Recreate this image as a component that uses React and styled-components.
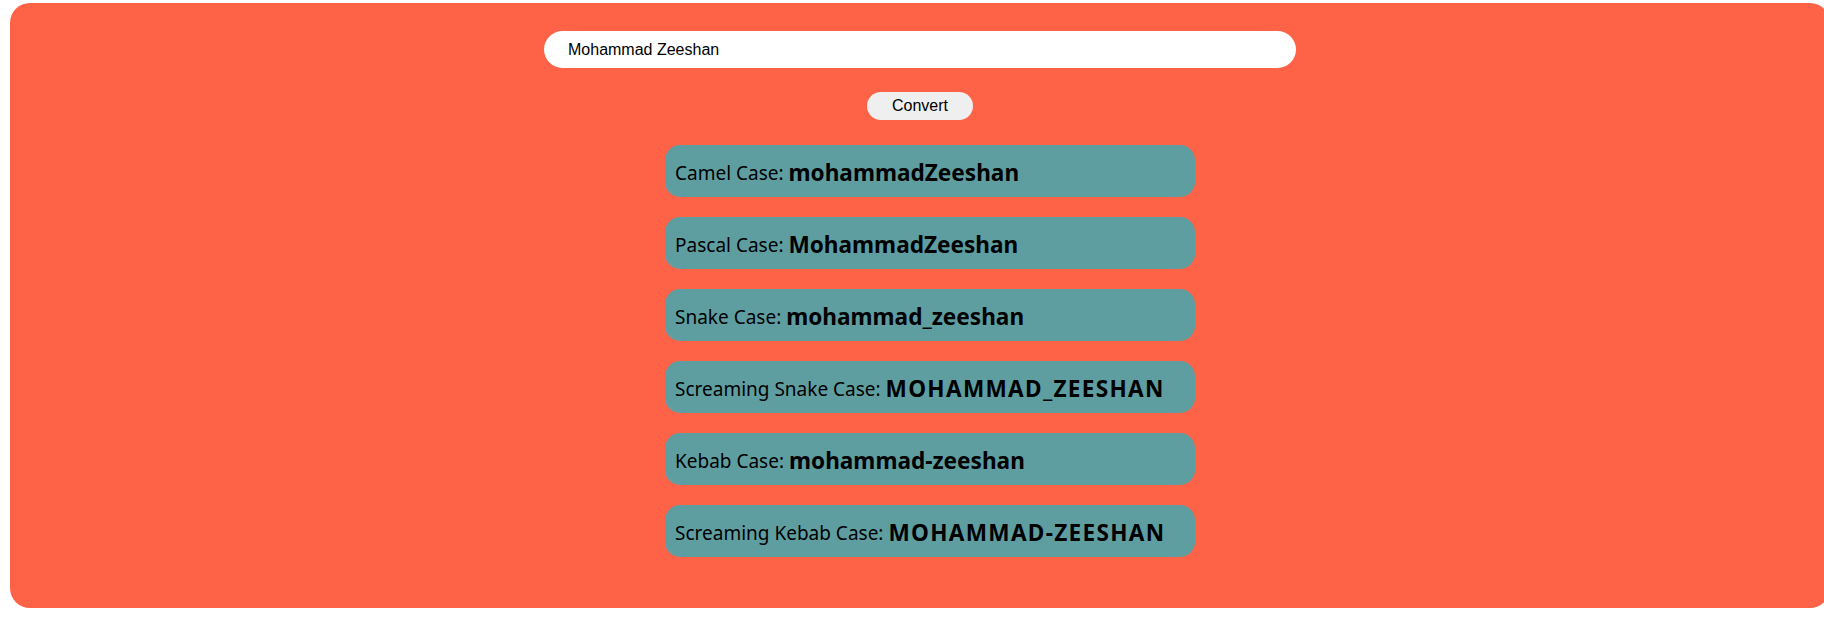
import React, { useState } from "react";
import styled, { createGlobalStyle } from "styled-components";

const Global = createGlobalStyle`
  html, body {
    margin: 0;
    padding: 0;
    background: #ffffff;
    overflow: hidden;
  }
  body {
    font-family: "Liberation Sans", Arial, sans-serif;
  }
`;

const Panel = styled.div`
  margin: 3px 0 0 10px;
  width: 1820px;
  height: 605px;
  box-sizing: border-box;
  background: #ff6347;
  border-radius: 20px;
  padding-top: 28px;
  display: flex;
  flex-direction: column;
  align-items: center;
`;

const Input = styled.input`
  width: 752px;
  height: 37px;
  box-sizing: border-box;
  border: none;
  outline: none;
  border-radius: 19px;
  background: #ffffff;
  padding: 0 24px;
  font-family: "Liberation Sans", Arial, sans-serif;
  font-size: 16px;
  color: #000;
`;

const Button = styled.button`
  margin-top: 24px;
  width: 106px;
  height: 28px;
  border: none;
  border-radius: 14px;
  background: #efefef;
  font-family: "Liberation Sans", Arial, sans-serif;
  font-size: 16px;
  color: #000;
  padding: 0;
  cursor: pointer;
`;

const List = styled.div`
  margin-top: 25px;
  margin-left: 20px;
  display: flex;
  flex-direction: column;
  gap: 20px;
`;

const Card = styled.div`
  width: 530px;
  height: 52px;
  box-sizing: border-box;
  background: #5f9ea0;
  border-radius: 15px;
  padding: 3px 10px 0;
  display: flex;
  align-items: center;
  font-family: "Noto Sans", "Open Sans", sans-serif;
  color: #000;
`;

const Label = styled.span`
  font-size: 19px;
  white-space: pre;
`;

const Value = styled.span`
  font-size: 22.6px;
  font-weight: 700;
  letter-spacing: ${(p) => (p.$upper ? "1.3px" : "0")};
`;

const toWords = (s) => s.trim().split(/\s+/).filter(Boolean).map((w) => w.toLowerCase());
const cap = (w) => w.charAt(0).toUpperCase() + w.slice(1);

const cases = [
  ["Camel Case", (w) => w.map((x, i) => (i ? cap(x) : x)).join(""), false],
  ["Pascal Case", (w) => w.map(cap).join(""), false],
  ["Snake Case", (w) => w.join("_"), false],
  ["Screaming Snake Case", (w) => w.join("_").toUpperCase(), true],
  ["Kebab Case", (w) => w.join("-"), false],
  ["Screaming Kebab Case", (w) => w.join("-").toUpperCase(), true],
];

export default function App() {
  const [text, setText] = useState("Mohammad Zeeshan");
  const [words, setWords] = useState(toWords("Mohammad Zeeshan"));
  return (
    <>
      <Global />
      <Panel>
        <Input value={text} onChange={(e) => setText(e.target.value)} />
        <Button onClick={() => setWords(toWords(text))}>Convert</Button>
        <List>
          {cases.map(([name, fn, upper]) => (
            <Card key={name}>
              <Label>{name}: </Label>
              <Value $upper={upper}>{fn(words)}</Value>
            </Card>
          ))}
        </List>
      </Panel>
    </>
  );
}
